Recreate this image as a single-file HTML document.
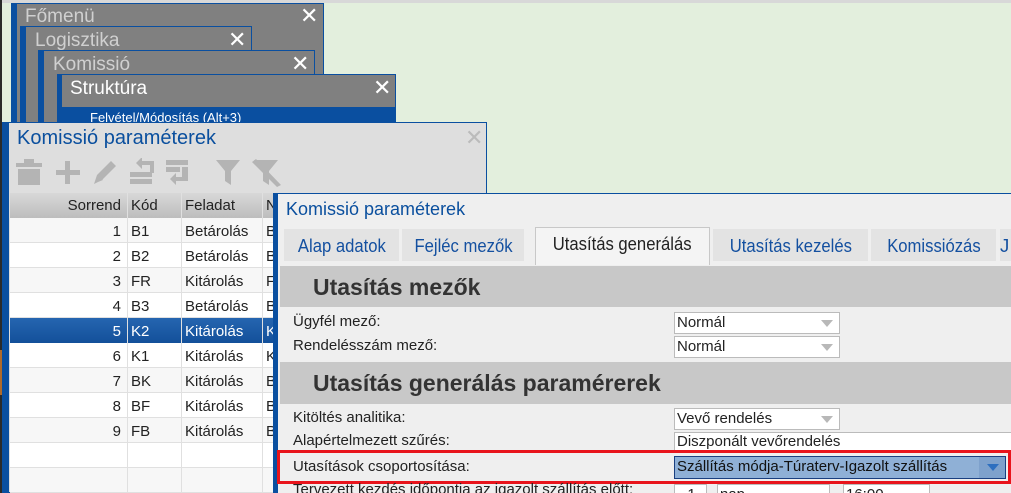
<!DOCTYPE html>
<html><head><meta charset="utf-8"><style>
*{margin:0;padding:0;box-sizing:border-box}
html,body{width:1011px;height:493px;overflow:hidden}
body{background:#e3efdd;font-family:"Liberation Sans",sans-serif;position:relative}
.a{position:absolute}
.x{position:absolute;color:#fff;font-size:22px;line-height:22px}
.tt{position:absolute;color:#d0d0d0;font-size:19px}
.cell{position:absolute;font-size:15px;color:#222;line-height:24px}
.lbl{position:absolute;font-size:15px;color:#222;left:293px;white-space:nowrap}
.cb{position:absolute;background:#fff;border:1px solid #bbb;font-size:15px;color:#222;padding-left:2px;line-height:19px;white-space:nowrap}
.cb .ar{position:absolute;right:6px;top:7px;width:0;height:0;border-left:6px solid transparent;border-right:6px solid transparent;border-top:7px solid #b8b8b8}
.tab{position:absolute;top:229px;height:32px;background:#e3e3e3;color:#1450a0;font-size:18.5px;line-height:34px;text-align:center;white-space:nowrap;overflow:hidden}
.tab span{display:inline-block;transform:scaleX(.9)}
.sec{position:absolute;left:313px;font-size:23px;font-weight:bold;color:#333;white-space:nowrap}
</style></head><body>
<div class="a" style="left:0;top:0;width:1011px;height:3px;background:#d8d8d8"></div>
<div class="a" style="left:0;top:0;width:2px;height:493px;background:#2a2a2a"></div>
<div class="a" style="left:0;top:350px;width:2px;height:45px;background:#b06a2a"></div>
<div class="a" style="left:11px;top:3px;width:313px;height:125px;background:#808080;border-left:6px solid #0a4fa0;border-right:1px solid #0a4fa0;border-top:1px solid #0a4fa0"></div>
<div class="tt" style="left:25px;top:6px">Főmenü</div><div class="x" style="left:300px;top:5px">✕</div>
<div class="a" style="left:20px;top:26px;width:232px;height:100px;background:#808080;border-left:6px solid #0a4fa0;border-right:1px solid #0a4fa0;border-top:1px solid #0a4fa0"></div>
<div class="tt" style="left:35px;top:30px">Logisztika</div><div class="x" style="left:228px;top:29px">✕</div>
<div class="a" style="left:38px;top:50px;width:277px;height:76px;background:#808080;border-left:6px solid #0a4fa0;border-right:1px solid #0a4fa0;border-top:1px solid #0a4fa0"></div>
<div class="tt" style="left:53px;top:54px">Komissió</div><div class="x" style="left:291px;top:53px">✕</div>
<div class="a" style="left:57px;top:74px;width:339px;height:52px;background:#0a4fa0"></div>
<div class="a" style="left:62px;top:75px;width:333px;height:32px;background:#808080"></div>
<div class="a" style="left:70px;top:78px;color:#fff;font-size:19px">Struktúra</div><div class="x" style="left:373px;top:77px">✕</div>
<div class="a" style="left:90px;top:110px;color:#fff;font-size:13px">Felvétel/Módosítás (Alt+3)</div>
<div class="a" style="left:2px;top:122px;width:485px;height:371px;background:#dedede;border:1px solid #0a4fa0;border-left:7px solid #0a4fa0"></div>
<div class="a" style="left:17px;top:127px;color:#0a4f9e;font-size:20px">Komissió paraméterek</div>
<div class="a" style="left:465px;top:125px;color:#bbb;font-size:22px">✕</div>
<svg class="a" style="left:14px;top:158px" width="270" height="30" fill="#b4b4b4">
<rect x="2" y="5" width="26" height="4"/><rect x="10" y="1" width="10" height="4"/><rect x="4" y="11" width="22" height="16"/>
<rect x="42" y="12" width="24" height="5"/><rect x="51" y="3" width="5" height="23"/>
<path d="M80 26l3-9 14-14 5 5-14 14z M84 24l2-5 3 3z"/>
<rect x="116" y="14" width="22" height="5"/><rect x="116" y="21" width="22" height="5"/><path d="M128 3h12v12h-4v-8h-8v4l-6-6 6-6z"/>
<rect x="152" y="2" width="22" height="5"/><rect x="152" y="9" width="14" height="5"/><path d="M168 9h6v14h-12v4l-6-6 6-6v4h6z"/>
<path d="M202 2h24l-9 11v14l-6-4v-10z"/>
<path d="M240 2h24l-9 11v14l-6-4v-10z M238 4l4-3 25 26-4 2z"/>
</svg>
<div class="a" style="left:10px;top:193px;width:476px;height:25px;background:linear-gradient(#d8d8d8,#bdbdbd)"></div>
<div class="cell" style="left:10px;top:194px;width:111px;text-align:right">Sorrend</div>
<div class="cell" style="left:131px;top:194px">Kód</div>
<div class="cell" style="left:185px;top:194px">Feladat</div>
<div class="cell" style="left:266px;top:194px">N</div>
<div class="a" style="left:10px;top:218px;width:476px;height:275px;background:repeating-linear-gradient(#f7f7f7 0 24px,#e0e0e0 24px 25px,#fff 25px 49px,#e0e0e0 49px 50px)"></div>
<div class="a" style="left:10px;top:318px;width:476px;height:25px;background:linear-gradient(#2565b0,#13509a)"></div>
<div class="a" style="left:127px;top:193px;width:1px;height:300px;background:#e0e0e0"></div>
<div class="a" style="left:181px;top:193px;width:1px;height:300px;background:#e0e0e0"></div>
<div class="a" style="left:262px;top:193px;width:1px;height:300px;background:#e0e0e0"></div>
<div class="cell" style="left:10px;top:219px;width:111px;text-align:right;line-height:25px">1<br>2<br>3<br>4<br><span style="color:#fff">5</span><br>6<br>7<br>8<br>9</div>
<div class="cell" style="left:131px;top:219px;line-height:25px">B1<br>B2<br>FR<br>B3<br><span style="color:#fff">K2</span><br>K1<br>BK<br>BF<br>FB</div>
<div class="cell" style="left:185px;top:219px;line-height:25px">Betárolás<br>Betárolás<br>Kitárolás<br>Betárolás<br><span style="color:#fff">Kitárolás</span><br>Kitárolás<br>Kitárolás<br>Kitárolás<br>Kitárolás</div>
<div class="cell" style="left:266px;top:219px;line-height:25px">B<br>B<br>F<br>B<br><span style="color:#fff">K</span><br>K<br>B<br>B<br>B</div>
<div class="a" style="left:273px;top:193px;width:738px;height:300px;background:#efefef;border-top:1px solid #0a4fa0;border-left:5px solid #0a4fa0"></div>
<div class="a" style="left:286px;top:199px;color:#0a4f9e;font-size:18px">Komissió paraméterek</div>
<div class="tab" style="left:284px;width:115px"><span>Alap adatok</span></div>
<div class="tab" style="left:402px;width:122px"><span>Fejléc mezők</span></div>
<div class="tab" style="left:535px;top:227px;width:175px;height:38px;background:#f4f4f4;border:1px solid #c8c8c8;border-bottom:none;color:#222;line-height:32px"><span>Utasítás generálás</span></div>
<div class="tab" style="left:713px;width:155px"><span>Utasítás kezelés</span></div>
<div class="tab" style="left:871px;width:125px"><span>Komissiózás</span></div>
<div class="tab" style="left:1000px;width:11px;text-align:left">J</div>
<div class="a" style="left:280px;top:266px;width:731px;height:41px;background:#c8c8c8"></div>
<div class="sec" style="top:274px">Utasítás mezők</div>
<div class="lbl" style="top:313px">Ügyfél mező:</div>
<div class="cb" style="left:674px;top:312px;width:166px;height:22px">Normál<div class="ar"></div></div>
<div class="lbl" style="top:337px">Rendelésszám mező:</div>
<div class="cb" style="left:674px;top:336px;width:166px;height:22px">Normál<div class="ar"></div></div>
<div class="a" style="left:280px;top:362px;width:731px;height:42px;background:#c8c8c8"></div>
<div class="sec" style="top:370px">Utasítás generálás paramérerek</div>
<div class="lbl" style="top:409px">Kitöltés analitika:</div>
<div class="cb" style="left:674px;top:408px;width:166px;height:22px">Vevő rendelés<div class="ar"></div></div>
<div class="lbl" style="top:432px">Alapértelmezett szűrés:</div>
<div class="cb" style="left:674px;top:432px;width:340px;height:21px;line-height:18px">Diszponált vevőrendelés</div>
<div class="lbl" style="top:458px">Utasítások csoportosítása:</div>
<div class="cb" style="left:674px;top:456px;width:332px;height:23px;background:#8fb0d6;border-color:#1a3f80;color:#111">Szállítás módja-Túraterv-Igazolt szállítás<div class="a" style="right:0;top:0;width:26px;height:21px;background:#7ea1cc"></div><div class="ar" style="border-top-color:#2e6fbf;right:6px"></div></div>
<div class="a" style="left:277px;top:450px;width:734px;height:34px;border:3px solid #e8141c"></div>
<div class="lbl" style="top:481px">Tervezett kezdés időpontja az igazolt szállítás előtt:</div>
<div class="cb" style="left:674px;top:484px;width:33px;height:20px;text-align:center">1</div>
<div class="cb" style="left:717px;top:484px;width:113px;height:20px">nap</div>
<div class="cb" style="left:843px;top:484px;width:87px;height:20px">16:00</div>
</body></html>
